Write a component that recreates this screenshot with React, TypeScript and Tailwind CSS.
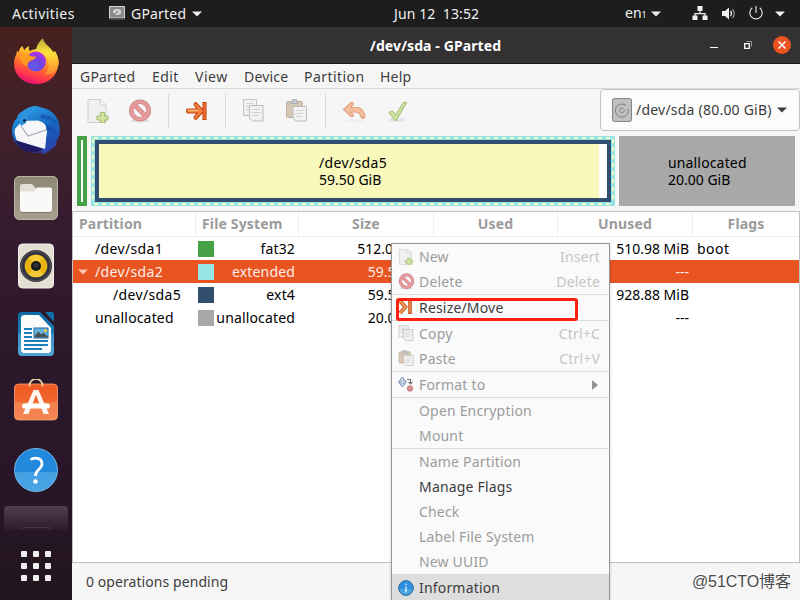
import React from 'react';

const Firefox = () => (
  <svg width="48" height="48" viewBox="0 0 48 48">
    <defs>
      <linearGradient id="ff1" x1="0.75" y1="0" x2="0.35" y2="1">
        <stop offset="0" stopColor="#fff44f" />
        <stop offset="0.3" stopColor="#ffb62a" />
        <stop offset="0.58" stopColor="#ff6a2e" />
        <stop offset="0.82" stopColor="#ff3050" />
        <stop offset="1" stopColor="#e0107c" />
      </linearGradient>
      <radialGradient id="ff2" cx="0.4" cy="0.75" r="0.75">
        <stop offset="0" stopColor="#5b5fe0" />
        <stop offset="0.55" stopColor="#7540e8" />
        <stop offset="1" stopColor="#b833e1" />
      </radialGradient>
      <linearGradient id="ff3" x1="0" y1="0" x2="0" y2="1">
        <stop offset="0" stopColor="#b9ab3a" />
        <stop offset="0.4" stopColor="#ffe23c" />
        <stop offset="1" stopColor="#ff8a2c" />
      </linearGradient>
    </defs>
    <path d="M10 8c1 1 2 3 2.200 4.500 1-2.500 3-3.500 4.800-4.500-.5 2-.2 3.800 1 5 6-4 14-2 17 5l8-5c2.500 5 4.300 9 3.500 13.500C45 38.500 36 46 24.500 46 11 46 2 37 2 25c0-4 1.500-7 2.500-9.500.3-1 .2-2 .5-3 .8 1 1.500 1.500 1.800 2C7 12 8 10 10 8z" fill="url(#ff1)" />
    <path d="M31 .5c1 5 5 7 8.500 11 1.300 1.500 2 3 2.500 4.500.8-.6.900-1.500.8-2.500 3.500 4.500 4.200 9.500 3.200 14C44 34 38 37 33 36c6-6 5-15-1-19l-8-4c0-4 3-10 7-12.500z" fill="url(#ff3)" />
    <circle cx="24" cy="23.500" r="10" fill="url(#ff2)" />
    <path d="M8 17.500c3-2 7-1.500 10 .2 2 1 5 .3 6 1.300-.4 2.500-4 3-6 4-2 1.200-2 3.200-2.500 5C11 27 8 23 8 17.500z" fill="#ff9b22" />
  </svg>
);

const Thunderbird = () => (
  <svg width="50" height="50" viewBox="0 0 50 50">
    <defs>
      <linearGradient id="tb1" x1="0.3" y1="0" x2="0.7" y2="1">
        <stop offset="0" stopColor="#2aa1e6" />
        <stop offset="0.5" stopColor="#1666bf" />
        <stop offset="1" stopColor="#2d3fa8" />
      </linearGradient>
    </defs>
    <path d="M20 2c4-2 8-.5 10 .5C42 4 49 14 49 25c0 6-2 9-4 12l1 1c-2 4-5 6-8 8-3 2-5 3-8 3l1-3-5 2C14 48 1 40 1 26 1 20 3 16 6 13c1-5 6-8 10-8z" fill="url(#tb1)" />
    <path d="M4 24c2-3 5-5 7-8l16-.5q9 2 9 10.500L34 44 6 36c-2-5-3-8-2-12z" fill="#f7f7f9" />
    <path d="M9.500 9.500C13 4 18 1.500 23 1.500c-1 2-1 3-.5 4.500C18 9 15 13 15 18l-5 3C8 17 8 13 9.500 9.500z" fill="#2d92dc" />
    <path d="M10 21l7 10 18-6" fill="none" stroke="#a4a9b4" strokeWidth="1.100" />
    <path d="M4 35l28 9-5 3C16 49 7 43 4 35z" fill="#1f1b5e" />
    <path d="M29 10c8-1 14 3 18 10-4-4-9-6-16-6zM35 20c5 1 10 5 12 11-3-3-7-5-12-6zM36 31c3 1 7 3 8 7-3-2-5-3-9-3z" fill="#174fae" opacity=".7" />
    <circle cx="13.500" cy="15.500" r="1.500" fill="#172347" />
  </svg>
);

const Files = () => (
  <svg width="46" height="46" viewBox="0 0 46 46">
    <defs>
      <linearGradient id="fi1" x1="0" y1="0" x2="0" y2="1">
        <stop offset="0" stopColor="#8f8776" />
        <stop offset="1" stopColor="#a69f8d" />
      </linearGradient>
    </defs>
    <rect x="1.500" y="1.500" width="43" height="43" rx="4.500" fill="url(#fi1)" stroke="#b9b3a5" />
    <path d="M7 16v-4.500A2.500 2.500 0 0 1 9.500 9h9.500l3.500 4H35v5H7z" fill="#e3dfd5" />
    <path d="M7 16.500h14l3.500-4H37a2 2 0 0 1 2 2V34a3 3 0 0 1-3 3H10a3 3 0 0 1-3-3z" fill="#faf9f8" />
    <path d="M8 37.500h30" stroke="#7d7667" strokeWidth="1" />
  </svg>
);

const Rhythmbox = () => (
  <svg width="38" height="46" viewBox="0 0 38 46">
    <rect x="1.500" y="1" width="35" height="44" rx="4" fill="#e4dfd3" stroke="#f3efe6" />
    <circle cx="19" cy="23" r="16" fill="#33343f" />
    <circle cx="19" cy="23" r="14.800" fill="none" stroke="#55565f" strokeWidth="1" />
    <circle cx="19" cy="23" r="11.300" fill="#e8b410" />
    <path d="M19 23l-7.500-8.500A11.300 11.300 0 0 1 26.500 14.500zM19 23l7.500 8.500a11.300 11.300 0 0 1-15 0z" fill="#f7cf3c" opacity=".8" />
    <circle cx="19" cy="23" r="5" fill="#15181c" />
    <circle cx="19" cy="22.500" r="2.500" fill="#34383c" />
  </svg>
);

const Writer = () => (
  <svg width="38" height="46" viewBox="0 0 38 46">
    <defs>
      <linearGradient id="wr1" x1="0" y1="0" x2="0" y2="1">
        <stop offset="0" stopColor="#0e6ba6" />
        <stop offset="0.5" stopColor="#1c7fb8" />
        <stop offset="0.51" stopColor="#3993c6" />
        <stop offset="1" stopColor="#4fa6d6" />
      </linearGradient>
    </defs>
    <path d="M5 1h18l14 14v26a4 4 0 0 1-4 4H5a4 4 0 0 1-4-4V5a4 4 0 0 1 4-4z" fill="url(#wr1)" />
    <path d="M28 1h6a3 3 0 0 1 3 3v7z" fill="#1272a9" />
    <path d="M7.500 4H22l12 13v21.500a3.500 3.500 0 0 1-3.500 3.500h-23A3.500 3.500 0 0 1 4 38.500v-31A3.500 3.500 0 0 1 7.500 4z" fill="#fbfbfb" />
    <path d="M7 18h8M7 22h8M7 26h8M7 30h24M7 34h24M7 38h18" stroke="#1b80bd" strokeWidth="1.900" />
    <rect x="17" y="17" width="14" height="10" fill="#66b4e0" stroke="#1b6e9f" strokeWidth="1" />
    <path d="M18 26.500v-2l3.500-4 3 3 2-2 4 4v1z" fill="#484f54" />
    <circle cx="28.500" cy="19.500" r="1.600" fill="#f7c331" />
  </svg>
);

const Software = () => (
  <svg width="46" height="46" viewBox="0 0 46 46">
    <defs>
      <linearGradient id="sw1" x1="0" y1="0" x2="0" y2="1">
        <stop offset="0" stopColor="#f05a22" />
        <stop offset="0.5" stopColor="#f1662f" />
        <stop offset="0.51" stopColor="#f37d4c" />
        <stop offset="1" stopColor="#f48754" />
      </linearGradient>
    </defs>
    <rect x="1.500" y="5" width="43" height="36" rx="4" fill="url(#sw1)" stroke="#f7a177" strokeWidth=".8" />
    <path d="M16.500 7.500V6.500a6.500 6.500 0 0 1 13 0v1" fill="none" stroke="#eed6a4" strokeWidth="1.700" />
    <path d="M20.500 11h5L36 35h-5.500L23 16l-7.500 19H10z" fill="#fff4ee" />
    <rect x="9" y="24.500" width="28" height="5" rx="2.500" fill="#fff" />
  </svg>
);

const Help = () => (
  <div className="flex h-[44px] w-[44px] items-center justify-center rounded-full border border-[#73b9ea] bg-[linear-gradient(#2088dd_0%,#2389dc_54%,#429fe2_55%,#49a5e5_100%)]">
    <svg width="20" height="32" viewBox="0 0 20 32" fill="none" stroke="#fff">
      <path d="M4.500 5.500C10 2.500 16 4.500 16 10c0 5.500-6.500 5-6.500 12" strokeWidth="2.800" />
      <circle cx="9.500" cy="27.500" r="2.300" fill="#fff" stroke="none" />
    </svg>
  </div>
);

const NewIcon = ({ s = 24 }: { s?: number }) => (
  <svg width={s} height={s} viewBox="0 0 24 24" className="shrink-0">
    <path d="M2 .5h12.500L20 6v17.500H2z" fill="#f0f0ef" stroke="#cfcfcd" />
    <path d="M14.500.5V6H20z" fill="#fff" stroke="#cfcfcd" />
    <path d="M14.500 13.500h4v3.500H22v4h-3.500v3h-4v-3H11v-4h3.500z" fill="#d1e3a0" stroke="#a0bd72" />
  </svg>
);

const DeleteIcon = ({ s = 24 }: { s?: number }) => (
  <svg width={s} height={s} viewBox="0 0 24 24" className="shrink-0">
    <ellipse cx="12" cy="22" rx="10" ry="1.500" fill="#e4e2e2" />
    <circle cx="12" cy="11.500" r="8.700" fill="none" stroke="#d08489" strokeWidth="4.600" />
    <path d="M6 5.500l12 12" stroke="#d08489" strokeWidth="4.600" />
    <circle cx="12" cy="11.500" r="8.700" fill="none" stroke="#e59c9f" strokeWidth="3" />
    <path d="M5.500 5l13 13" stroke="#e59c9f" strokeWidth="3" />
  </svg>
);

const ResizeIcon = () => (
  <svg width="24" height="24" viewBox="0 0 24 24">
    <path d="M2.500 10h9.700L9.500 6.500Q8.500 4 11 3.500l7 7.500V3.500h3v17h-3V13l-7 7.500Q8.500 20 9.500 17.500L12.200 14H2.500Q.5 12 2.500 10z" fill="#ef8540" stroke="#c9440c" strokeWidth="1.100" />
    <path d="M3 11.500h10" stroke="#f7bb75" strokeWidth="1.300" />
    <path d="M19.500 4.500v15" stroke="#ee6234" strokeWidth="1.200" />
  </svg>
);

const ResizeSmall = () => (
  <svg width="16" height="16" viewBox="0 0 16 16" className="shrink-0">
    <path d="M2 1l5.500 6L2 13" fill="none" stroke="#c4521d" strokeWidth="3.600" />
    <path d="M2 1l5.500 6L2 13" fill="none" stroke="#f7a35e" strokeWidth="1.800" />
    <path d="M12 0v14" stroke="#c4521d" strokeWidth="3.600" />
    <path d="M12 1v12" stroke="#f08043" strokeWidth="1.800" />
  </svg>
);

const CopyIcon = ({ s = 24 }: { s?: number }) => (
  <svg width={s} height={s} viewBox="0 0 24 24" className="shrink-0">
    <path d="M1.500.5h13v16h-13z" fill="#f1f1f1" stroke="#c2c2c2" />
    <path d="M4 4.500h8M4 7.500h8M4 10.500h5" stroke="#d3d3d3" />
    <path d="M7.500 6.500h13.500v15.500h-10.500l-3-3z" fill="#f1f1f1" stroke="#b9b9b9" />
    <path d="M10 10.500h8M10 13.500h8M10 16.500h6" stroke="#d0d0d0" />
  </svg>
);

const PasteIcon = ({ s = 24 }: { s?: number }) => (
  <svg width={s} height={s} viewBox="0 0 24 24" className="shrink-0">
    <rect x="1.500" y="2.500" width="16" height="16" rx="1" fill="#d5c7b4" stroke="#beb09e" />
    <path d="M6 4.500V2.500h1.500V.8h4v1.700H13v2z" fill="#c9cacb" stroke="#a9abae" />
    <path d="M8 7.500h13.500V22H11l-3-3z" fill="#f2f2f2" stroke="#bcbcbc" />
    <path d="M10.500 11.500h8M10.500 14.500h8M10.500 17.500h6" stroke="#d0d0d0" />
  </svg>
);

const UndoIcon = () => (
  <svg width="24" height="24" viewBox="0 0 24 24">
    <ellipse cx="13" cy="21.500" rx="10" ry="1.300" fill="#ededed" />
    <path d="M1.500 10.500L9 3.500q2.500-.5 2 2L8.800 8.500H14c5 0 8 3.500 9 8.500.3 2.500-3 3.500-4 1-1-4-3-5-6-5H9l2 2.500q.8 2.500-1.800 2.200z" fill="#f4bd9c" stroke="#e59d7d" strokeWidth="1.100" />
  </svg>
);

const CheckIcon = () => (
  <svg width="24" height="24" viewBox="0 0 24 24">
    <ellipse cx="11" cy="21" rx="9" ry="2" fill="#e6e6e6" />
    <path d="M3 13.500l3-1.500q2.500 1 3.500 4L17.500 3.500q2-1 3 .5L10.500 21q-1 1-2 0z" fill="#cce29d" stroke="#abc585" strokeWidth="1.100" />
  </svg>
);

const FormatIcon = () => (
  <svg width="16" height="16" viewBox="0 0 16 16" className="shrink-0">
    <path d="M4.300 0l4 5-4 5-4-5z" fill="#a9bed4" stroke="#7d91aa" strokeWidth=".9" />
    <path d="M4.300 1v8" stroke="#dbe5ef" strokeWidth="1" />
    <path d="M9 2.500h3.500V7M10.500 5l2 2 2-2" fill="none" stroke="#777" strokeWidth="1.100" />
    <circle cx="12" cy="11.500" r="2.700" fill="#df8a8d" stroke="#bf6c70" strokeWidth=".8" />
  </svg>
);

const InfoIcon = () => (
  <svg width="16" height="16" viewBox="0 0 16 16" className="shrink-0">
    <circle cx="8" cy="8" r="7.400" fill="#2d8fdd" stroke="#3b6f9d" />
    <path d="M1.500 9a6.600 6.600 0 0 0 13 0z" fill="#4ba5e4" />
    <path d="M8 6.500v6M8 3.500v1.500" stroke="#e3f2fd" strokeWidth="1.400" />
  </svg>
);

const Caret = ({ className }: { className: string }) => (
  <svg width="10" height="6" viewBox="0 0 10 6" className={className}>
    <path d="M0 .5h10L5 5.500z" fill="currentColor" />
  </svg>
);

const TopBar = () => (
  <header className="flex h-[27px] items-center bg-[#1d1d1d] text-[#f0f0f0]">
    <span className="ml-3 w-[97px] tracking-[0.45px]">Activities</span>
    <svg width="16" height="15" viewBox="0 0 16 15">
      <path d="M.5.5h15v11.500H.5z" fill="#8b8b8b" stroke="#d5d5d5" />
      <path d="M0 12h16v1.800H0z" fill="#555" />
      <ellipse cx="8" cy="6" rx="4.800" ry="3.800" fill="#d0d0d0" stroke="#666" strokeWidth=".7" />
      <path d="M4 9l5-3.500" stroke="#666" />
    </svg>
    <span className="ml-[6px] w-[61px] tracking-[0.2px]">GParted</span>
    <Caret className="" />
    <span className="ml-[192px] w-[231px] whitespace-pre tracking-[0.1px]">Jun 12  13:52</span>
    <span className="w-[26px]">en<span className="text-[9px]">1</span></span>
    <Caret className="" />
    <svg width="16" height="16" viewBox="0 0 16 16" className="ml-[31px]" fill="#f0f0f0">
      <path d="M5.500 0h5v5h-5zM.5 9.500h5v4.500h-5zM10.500 9.500h5v4.500h-5zM7.400 4h1.200v3h5v3h-1.200V8.200H3.600V10H2.400V7h5z" />
    </svg>
    <svg width="16" height="16" viewBox="0 0 16 16" className="ml-[13px]" fill="none" stroke="#f0f0f0">
      <path d="M1 5h3L8 1.500v12L4 10H1z" fill="#f0f0f0" stroke="none" />
      <path d="M9.500 5q2 2.500 0 5" strokeWidth="1.300" />
      <path d="M11.500 3q3.500 4.500 0 9" strokeWidth="1" opacity=".75" />
    </svg>
    <svg width="16" height="16" viewBox="0 0 16 16" className="ml-[11px]" fill="none" stroke="#dedede" strokeWidth="1.200">
      <path d="M4.300 1.700a6.200 6.200 0 1 0 7.400 0M8 0v7" />
    </svg>
    <Caret className="ml-[11px]" />
  </header>
);

const Dock = () => (
  <nav className="flex w-[72px] shrink-0 flex-col items-center bg-[linear-gradient(#48211f_0%,#40202a_18%,#351b30_36%,#2d182b_55%,#281628_78%,#22151e_100%)] pt-px">
    {[Firefox, Thunderbird, Files, Rhythmbox, Writer, Software, Help].map((Icon, i) => (
      <div key={i} className="flex h-[68px] shrink-0 items-center justify-center">
        <Icon />
      </div>
    ))}
    <div className="mt-[2px] flex h-[24px] w-[64px] shrink-0 items-end justify-center rounded-t bg-gradient-to-b from-[#503f4e] to-[#2c1c2b]">
      <div className="h-[3px] w-[30px] rounded-t border border-b-0 border-[#443444]" />
    </div>
    <div className="mt-[21px] grid grid-cols-3 gap-[6px]">
      {Array.from({ length: 9 }, (_, i) => (
        <i key={i} className="h-[6px] w-[6px] rounded-[1px] bg-[#f1efed]" />
      ))}
    </div>
  </nav>
);

const TitleBar = () => (
  <div className="flex h-[37px] items-center border-b border-[#1b191a] bg-[#343132] text-white">
    <span className="ml-[298px] w-[340px] pt-px font-bold tracking-[0.1px]">/dev/sda - GParted</span>
    <span className="mt-[5px] h-px w-2 bg-white" />
    <svg width="8" height="8" viewBox="0 0 8 8" className="ml-[26px]" fill="none">
      <path d="M.7 2.700h4.600v4.600H.7z" stroke="#fff" strokeWidth="1.300" />
      <path d="M2.500.5h5v5" stroke="#9a9898" />
    </svg>
    <span className="ml-[21px] flex h-[18px] w-[18px] items-center justify-center rounded-full bg-[#e95420]">
      <svg width="8" height="8" viewBox="0 0 8 8" stroke="#fff" strokeWidth="1.500">
        <path d="M.5.5l7 7M7.500.5l-7 7" />
      </svg>
    </span>
  </div>
);

const MenuBar = () => (
  <div className="flex h-[25px] items-center border-b border-[#dadada] pl-2 pt-[2px] tracking-[0.2px] text-[#3d3d3d]">
    <span className="w-[72px]">GParted</span>
    <span className="w-[43px] tracking-[0.4px]">Edit</span>
    <span className="w-[49px] tracking-[0.5px]">View</span>
    <span className="w-[60px]">Device</span>
    <span className="w-[76px] tracking-[0.45px]">Partition</span>
    <span>Help</span>
  </div>
);

const ToolSep = ({ className }: { className: string }) => <i className={`h-[34px] w-px bg-[#d9d9d9] ${className}`} />;

const Toolbar = () => (
  <div className="flex h-[43px] items-center pl-[14px]">
    <NewIcon />
    <span className="ml-[18px]"><DeleteIcon /></span>
    <ToolSep className="ml-[16px]" />
    <span className="ml-[16px]"><ResizeIcon /></span>
    <ToolSep className="ml-[16px]" />
    <span className="ml-[16px]"><CopyIcon /></span>
    <span className="ml-[19px]"><PasteIcon /></span>
    <ToolSep className="ml-[16px]" />
    <span className="ml-[16px]"><UndoIcon /></span>
    <span className="ml-[20px]"><CheckIcon /></span>
    <div className="-mt-px ml-auto flex h-[42px] w-[200px] shrink-0 items-center rounded-[4px] border border-[#c3c3c3] bg-[#fcfcfc] pl-[11px] text-[#3d3d3d]">
      <svg width="20" height="24" viewBox="0 0 20 24" className="shrink-0">
        <rect x=".5" y=".5" width="19" height="23" rx="2" fill="#b7b7b7" stroke="#858585" />
        <rect x="2" y="2" width="16" height="20" rx="1" fill="#bfbfbf" stroke="#cfcfcf" strokeWidth=".6" />
        <path d="M14.500 8a6.500 6.500 0 1 0 1.700 3" fill="none" stroke="#7d7d7d" strokeWidth="1" />
        <circle cx="10" cy="12.500" r="2.200" fill="none" stroke="#888" />
        <path d="M10 12.500l6-5" stroke="#d6d6d6" />
      </svg>
      <span className="ml-1 w-[141px] whitespace-nowrap tracking-[0.22px]">/dev/sda (80.00 GiB)</span>
      <Caret className="shrink-0" />
    </div>
  </div>
);

const DiskMap = () => (
  <div className="flex h-[78px] gap-1 px-[5px] py-1 leading-[17px] text-black">
    <div className="w-[10px] shrink-0 border-4 border-[#46a046] bg-white" />
    <div className="relative w-[524px] shrink-0 bg-[#97e4e6] p-1">
      <i className="absolute inset-x-[3px] top-px h-[2px] bg-[repeating-linear-gradient(90deg,#f8f8ba_0_4px,#97e4e6_4px_8px)]" />
      <i className="absolute inset-x-[3px] bottom-px h-[2px] bg-[repeating-linear-gradient(90deg,#f8f8ba_0_4px,#97e4e6_4px_8px)]" />
      <i className="absolute inset-y-[3px] left-px w-[2px] bg-[repeating-linear-gradient(#f8f8ba_0_4px,#97e4e6_4px_8px)]" />
      <i className="absolute inset-y-[3px] right-px w-[2px] bg-[repeating-linear-gradient(#f8f8ba_0_4px,#97e4e6_4px_8px)]" />
      <div className="h-full border-4 border-[#314e6e] bg-white">
        <div className="h-full w-[500px] bg-[#f8f8ba] pl-[220px] pt-[10px]">
          <div className="tracking-[0.35px]">/dev/sda5</div>
          <div>59.50 GiB</div>
        </div>
      </div>
    </div>
    <div className="w-[176px] shrink-0 bg-[#a8a8a8] pl-[49px] pt-[18px]">
      <div className="tracking-[0.15px]">unallocated</div>
      <div>20.00 GiB</div>
    </div>
  </div>
);

const COLS = 'grid grid-cols-[123px_103px_135px_124px_135px_1fr]';

type Row = { name: string; pad: string; color: string; fs: string; size: string; used: string; unused: string; flags: string; selected?: boolean };

const ROWS: Row[] = [
  { name: '/dev/sda1', pad: 'pl-[22px] tracking-[0.35px]', color: 'bg-[#46a046]', fs: 'fat32', size: '512.00 MiB', used: '1.02 MiB', unused: '510.98 MiB', flags: 'boot' },
  { name: '/dev/sda2', pad: 'pl-[22px] tracking-[0.35px]', color: 'bg-[#97e4e6]', fs: 'extended', size: '59.50 GiB', used: '---', unused: '---', flags: '', selected: true },
  { name: '/dev/sda5', pad: 'pl-[40px] tracking-[0.35px]', color: 'bg-[#314e6e]', fs: 'ext4', size: '59.50 GiB', used: '58.59 GiB', unused: '928.88 MiB', flags: '' },
  { name: 'unallocated', pad: 'pl-[22px] tracking-[0.15px]', color: 'bg-[#a8a8a8]', fs: 'unallocated', size: '20.00 GiB', used: '---', unused: '---', flags: '' },
];

const HEADERS = ['Partition', 'File System', 'Size', 'Used', 'Unused', 'Flags'];

const Table = () => (
  <div className="mt-px h-[352px] border border-[#c0c0c0] bg-white">
    <div className={`${COLS} h-[25px] border-b border-[#eeeeee] font-bold leading-[24px] tracking-[0.15px] text-[#9b9b9b]`}>
      {HEADERS.map((h, i) => (
        <div key={h} className={`whitespace-nowrap ${i < 5 ? 'border-r border-[#eeeeee]' : ''} ${i < 2 ? 'pl-[6px]' : 'text-center'}`}>{h}</div>
      ))}
    </div>
    {ROWS.map((r) => (
      <div key={r.name} className={`${COLS} h-[23px] leading-[23px] ${r.selected ? 'bg-[#e95420] text-[#fdeee8]' : 'text-black'}`}>
        <div className="flex items-center">
          {r.selected && <Caret className="ml-[5px] mr-[-15px] text-[#f8c5b0]" />}
          <span className={r.pad}>{r.name}</span>
        </div>
        <div className="flex items-center justify-between pl-[2px] pr-1">
          <i className={`h-4 w-4 shrink-0 ${r.color}`} />
          <span className="tracking-[0.15px]">{r.fs}</span>
        </div>
        <div className="pr-1 text-right">{r.size}</div>
        <div className="pr-1 text-right">{r.used}</div>
        <div className="pr-1 text-right">{r.unused}</div>
        <div className="pl-1 tracking-[0.5px]">{r.flags}</div>
      </div>
    ))}
  </div>
);

type Item = { label: string; icon?: React.ReactNode; accel?: string; on?: boolean; sub?: boolean; sep?: boolean };

const ITEMS: Item[] = [
  { label: 'New', icon: <NewIcon s={16} />, accel: 'Insert' },
  { label: 'Delete', icon: <DeleteIcon s={17} />, accel: 'Delete', sep: true },
  { label: 'Resize/Move', icon: <ResizeSmall />, on: true, sep: true },
  { label: 'Copy', icon: <CopyIcon s={17} />, accel: 'Ctrl+C' },
  { label: 'Paste', icon: <PasteIcon s={17} />, accel: 'Ctrl+V', sep: true },
  { label: 'Format to', icon: <FormatIcon />, sub: true, sep: true },
  { label: 'Open Encryption' },
  { label: 'Mount', sep: true },
  { label: 'Name Partition' },
  { label: 'Manage Flags', on: true },
  { label: 'Check' },
  { label: 'Label File System' },
  { label: 'New UUID' },
];

const ContextMenu = () => (
  <div className="absolute left-[391px] top-[243px] h-[357px] w-[219px] overflow-hidden border border-b-0 border-[#979797] bg-[#fafafa] tracking-[0.18px] shadow-[0_1px_3px_rgba(0,0,0,0.2)]">
    {ITEMS.map((it) => (
      <div key={it.label} className={it.sep ? 'border-b border-[#dcdcdc]' : ''}>
        <div className={`flex h-[25px] items-center pl-[6px] pr-[9px] ${it.on ? 'text-[#3d3d3d]' : 'text-[#9c9c9c]'}`}>
          <span className="flex w-[21px] shrink-0">{it.icon}</span>
          <span>{it.label}</span>
          {it.accel && <span className="ml-auto text-[#c5c5c5]">{it.accel}</span>}
          {it.sub && (
            <svg width="6" height="10" viewBox="0 0 6 10" className="ml-auto mr-[2px]"><path d="M0 0l6 5-6 5z" fill="#929292" /></svg>
          )}
        </div>
      </div>
    ))}
    <div className="flex h-[27px] items-center bg-[#dedede] pl-[6px] text-[#3d3d3d]">
      <span className="flex w-[21px] shrink-0"><InfoIcon /></span>
      <span>Information</span>
    </div>
  </div>
);

export default function App() {
  return (
    <div className="relative flex h-[600px] w-[800px] flex-col overflow-hidden bg-[#f6f6f6] font-['Noto_Sans','Noto_Sans_CJK_SC',sans-serif] text-[14px] leading-[20px]">
      <TopBar />
      <div className="flex min-h-0 flex-1">
        <Dock />
        <main className="flex min-w-0 flex-1 flex-col">
          <TitleBar />
          <MenuBar />
          <Toolbar />
          <DiskMap />
          <Table />
          <footer className="flex flex-1 items-center justify-between pl-[14px] pr-[9px] text-[#3d3d3d]">
            <span className="tracking-[0.07px]">0 operations pending</span>
            <span className="font-['Liberation_Sans','Noto_Sans_CJK_SC',sans-serif] text-[16px] tracking-[-0.05px] text-[#4a4a4a] [text-shadow:-1px_-1px_0_#fff]">@51CTO博客</span>
          </footer>
        </main>
      </div>
      <ContextMenu />
      <div className="absolute left-[396px] top-[298px] h-[23px] w-[182px] rounded-[3px] border-[3px] border-[#fb2012]" />
    </div>
  );
}
